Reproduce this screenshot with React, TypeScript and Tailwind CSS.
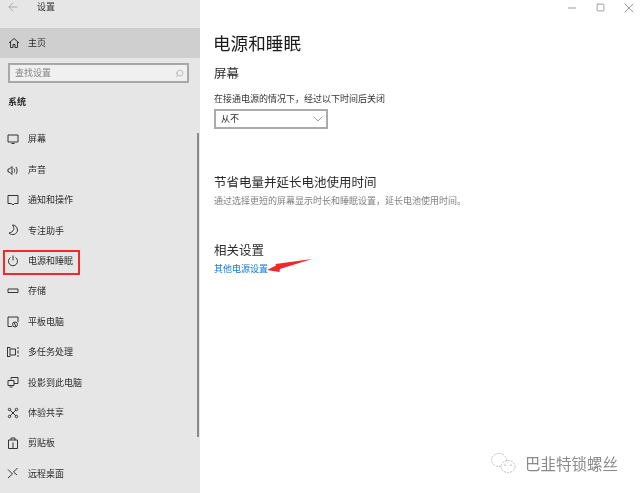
import React from 'react';
import { ArrowLeft, Search, ChevronDown, Minus, Square, X } from 'lucide-react';

const FONT = "font-['Noto_Sans_CJK_SC','Noto_Sans',sans-serif]";

const iconProps = {
  width: 12,
  height: 12,
  viewBox: '0 0 12 12',
  fill: 'none',
  stroke: '#333333',
  strokeWidth: 1,
};

const HomeIcon = () => (
  <svg {...iconProps}>
    <path d="M1 6 6 1.500 11 6M2.500 5v5.500h2.500V7.500h2v3h2.500V5" />
  </svg>
);
const DisplayIcon = () => (
  <svg {...iconProps}>
    <path d="M1 2h10v7H1zM4.500 10.500h3" />
  </svg>
);
const SoundIcon = () => (
  <svg {...iconProps}>
    <path d="M1 5v3h1.500L5 10.500v-8L2.500 5zM7 4.500c.8 1 .8 3 0 4M9 3c1.500 2 1.500 5 0 7" />
  </svg>
);
const NotifyIcon = () => (
  <svg {...iconProps}>
    <path d="M1 1.500h10v8H7.500L6 11 4.500 9.500H1z" />
  </svg>
);
const MoonIcon = () => (
  <svg {...iconProps}>
    <path d="M5.500 1c2.500 3 1.500 7-3.500 8 2.500 3 8.500 1.500 8.500-3C10.500 3 8 1 5.500 1z" />
  </svg>
);
const PowerIcon = () => (
  <svg {...iconProps}>
    <path d="M6 .5v5M3.500 2.500a4.500 4.500 0 1 0 5 0" />
  </svg>
);
const StorageIcon = () => (
  <svg {...iconProps}>
    <path d="M1 4h10v3.500H1z" />
  </svg>
);
const TabletIcon = () => (
  <svg {...iconProps}>
    <path d="M5 10.500H1V1h10v5" />
    <circle cx="8" cy="8.500" r="2.500" />
    <path d="M7 6.500l2 4" />
  </svg>
);
const MultitaskIcon = () => (
  <svg {...iconProps}>
    <path d="M3 3h5.500v6H3zM.5 1.500H3v1M.5 10.500H3v-1M.5 1v10M11 1v2M11 4.500v3M11 9v2" />
  </svg>
);
const ProjectIcon = () => (
  <svg {...iconProps}>
    <path d="M4 3.500V1.500h7v6H7M1 4.500h6v5H1zM2.500 11h3" />
  </svg>
);
const ShareIcon = () => (
  <svg {...iconProps}>
    <path d="M3 3l6 6M9 3 3 9" />
    <circle cx="2.500" cy="2.500" r="1.200" />
    <circle cx="9.500" cy="2.500" r="1.200" />
    <circle cx="2.500" cy="9.500" r="1.200" />
    <circle cx="9.500" cy="9.500" r="1.200" />
  </svg>
);
const ClipboardIcon = () => (
  <svg {...iconProps}>
    <path d="M1.500 3h9v8.500h-9zM4 3V1h4v2M6 5.500v6" />
  </svg>
);
const RemoteIcon = () => (
  <svg {...iconProps}>
    <path d="M1 2.500 5.500 7 1 11M10.500 1 6.500 5l3.500 3" />
  </svg>
);

const items = [
  { label: '屏幕', icon: DisplayIcon },
  { label: '声音', icon: SoundIcon },
  { label: '通知和操作', icon: NotifyIcon },
  { label: '专注助手', icon: MoonIcon },
  { label: '电源和睡眠', icon: PowerIcon },
  { label: '存储', icon: StorageIcon },
  { label: '平板电脑', icon: TabletIcon },
  { label: '多任务处理', icon: MultitaskIcon },
  { label: '投影到此电脑', icon: ProjectIcon },
  { label: '体验共享', icon: ShareIcon },
  { label: '剪贴板', icon: ClipboardIcon },
  { label: '远程桌面', icon: RemoteIcon },
];

export default function App() {
  return (
    <div className={`relative flex h-[493px] w-[640px] overflow-hidden bg-white text-[#2a2a2a] blur-[0.4px] ${FONT}`}>
      {/* Sidebar */}
      <aside className="relative flex w-[200px] shrink-0 flex-col overflow-hidden bg-[#e6e6e6]">
        <div className="flex h-[28px] items-start pl-[6px]">
          <ArrowLeft className="h-[14px] w-[14px] text-[#a3a3a3]" strokeWidth={1.5} />
          <span className="ml-[17px] mt-[1px] text-[9px] leading-[12px] text-[#333333]">设置</span>
        </div>

        <div className="flex h-[30px] items-center bg-[#cfcfcf] pl-[8px]">
          <HomeIcon />
          <span className="ml-[8px] text-[9px]">主页</span>
        </div>

        <div className="mx-[8px] mt-[5px] flex h-[20px] w-[181px] items-center justify-between border-2 border-[#a8a8a8] bg-[#f0f0f0] pl-[5px] pr-[3px]">
          <span className="text-[9px] text-[#858585]">查找设置</span>
          <Search className="h-[9px] w-[9px] -scale-x-100 text-[#858585]" strokeWidth={1.25} />
        </div>

        <div className="ml-[8px] mt-[12px] text-[9px] font-bold leading-[14px]">系统</div>

        <nav className="mt-[15px] flex flex-col">
          {items.map((item) => {
            const Icon = item.icon;
            return (
              <div key={item.label} className="flex h-[30.4px] shrink-0 items-center pl-[7px]">
                <Icon />
                <span className="ml-[9px] text-[9px]">{item.label}</span>
              </div>
            );
          })}
        </nav>

        {/* Scrollbar */}
        <div className="absolute left-[197px] top-[133px] h-[304px] w-[1.5px] bg-[#8a8a8a]" />
        {/* Red highlight */}
        <div className="absolute left-[3px] top-[250px] h-[25px] w-[77px] border-2 border-[#ee2b2b]" />
      </aside>

      {/* Content */}
      <main className="relative flex-1 pl-[14px]">
        <div className="absolute right-0 top-0 flex h-[15px] items-center text-[#9a9a9a]">
          <Minus className="mr-[18px] h-[12px] w-[12px]" strokeWidth={2} />
          <Square className="mr-[16px] h-[9px] w-[9px]" strokeWidth={2.5} />
          <X className="mr-[3px] h-[16px] w-[16px]" strokeWidth={1.5} />
        </div>

        <h1 className="mt-[31px] -ml-[1px] text-[17.6px] font-normal leading-[24px] text-[#1a1a1a]">电源和睡眠</h1>
        <h2 className="mt-[9px] text-[12.5px] font-normal leading-[17px]">屏幕</h2>
        <p className="mt-[11px] text-[9px] leading-[14px] text-[#333333]">在接通电源的情况下，经过以下时间后关闭</p>
        <div className="mt-[3px] flex h-[20px] w-[114px] items-center justify-between border-2 border-[#ababab] pl-[5px]">
          <span className="text-[9px]">从不</span>
          <ChevronDown className="h-[16px] w-[16px] text-[#777777]" strokeWidth={1} />
        </div>

        <h2 className="mt-[44px] text-[12.5px] font-normal leading-[18px]">节省电量并延长电池使用时间</h2>
        <p className="mt-[3px] text-[9px] leading-[14px] text-[#808080]">通过选择更短的屏幕显示时长和睡眠设置，延长电池使用时间。</p>
        <h2 className="mt-[33px] text-[12.5px] font-normal leading-[18px]">相关设置</h2>
        <a className="mt-[3px] block text-[9px] leading-[14px] text-[#0f78d4]">其他电源设置</a>

        {/* Red arrow annotation */}
        <svg className="absolute left-[66px] top-[255px]" width="50" height="22" viewBox="0 0 50 22">
          <path d="M1 15 10 10.500 9.500 9 46 4 14 14 13.500 17z" fill="#f02a2a" />
        </svg>

        {/* Watermark */}
        <div className="absolute left-[290px] top-[452px] flex items-center">
          <svg width="28" height="24" viewBox="0 0 28 24" fill="none" stroke="#b0b0b0" strokeWidth="0.8" strokeDasharray="2 1">
            <ellipse cx="9" cy="8" rx="7.500" ry="6.500" />
            <ellipse cx="18" cy="14.500" rx="7" ry="6" fill="white" />
            <circle cx="15" cy="13" r="0.6" />
            <circle cx="21" cy="13" r="0.6" />
          </svg>
          <span className="ml-[7px] text-[15.5px] leading-none text-[#8a8a8a]">巴韭特锁螺丝</span>
        </div>
      </main>
    </div>
  );
}
